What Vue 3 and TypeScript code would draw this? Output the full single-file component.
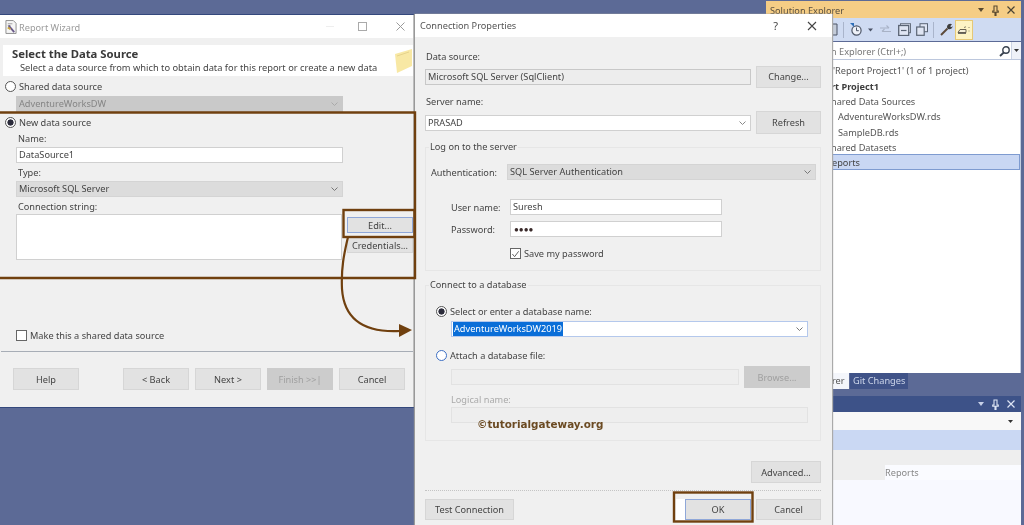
<script setup lang="ts">
const treeRows = [
  { text: "'Report Project1' (1 of 1 project)", cls: 'd0' },
  { text: 'rt Project1', cls: 'd1' },
  { text: 'hared Data Sources', cls: 'd2' },
  { text: 'AdventureWorksDW.rds', cls: 'd3' },
  { text: 'SampleDB.rds', cls: 'd3' },
  { text: 'hared Datasets', cls: 'd2' },
  { text: 'eports', cls: 'd2 current' },
]
</script>

<template>
  <div class="desk">
    <!-- Solution Explorer tool window -->
    <section class="vs">
      <div class="se">
        <header class="se-title">
          <span class="se-name">Solution Explorer</span>
          <span class="se-ctl">
            <svg width="6" height="4" viewBox="0 0 6 4"><path d="M0 0h6L3 4z" fill="#5a4a30" /></svg>
            <svg width="7" height="11" viewBox="0 0 7 11"><path d="M2 1h3v5h1.300v1.300H4V10.500H3V7.300H.7V6H2z" fill="none" stroke="#5a4a30" stroke-width="1.100" /></svg>
            <svg width="8" height="8" viewBox="0 0 8 8"><path d="M.5.5l7 7M7.500.5l-7 7" stroke="#4a4436" stroke-width="1.200" /></svg>
          </span>
        </header>
        <div class="se-tools">
          <svg class="t-home" width="7" height="13" viewBox="0 0 7 13">
            <path d="M0 1h6v11H0" fill="#c4ccd9" stroke="#4c5566" />
          </svg>
          <span class="t-sep first"></span>
          <svg class="t-clock" width="12" height="13" viewBox="0 0 12 13">
            <circle cx="6.500" cy="7.500" r="4.600" fill="#eef1f8" stroke="#4c5566" stroke-width="1.200" />
            <path d="M6.500 4.500v3.200h2.300" fill="none" stroke="#4c5566" />
            <path d="M0 0h4v4z" fill="#2f6fb8" />
          </svg>
          <svg class="t-drop" width="5" height="4" viewBox="0 0 5 4"><path d="M0 .5h5L2.500 3.500z" fill="#4a5366" /></svg>
          <svg class="t-sync" width="11" height="9" viewBox="0 0 11 9">
            <path d="M0 3h9M6.500.5L9 3M11 6.500H2M4.500 4L2 6.500" fill="none" stroke="#a8b2c6" stroke-width="1.100" />
          </svg>
          <svg class="t-coll" width="13" height="13" viewBox="0 0 13 13">
            <rect x="2.500" y=".7" width="10" height="9" fill="#dfe5f3" stroke="#66707f" />
            <rect x=".7" y="2.500" width="10" height="10" fill="#dfe5f3" stroke="#5a6474" stroke-width="1.300" />
            <path d="M3 7.500h5.500" stroke="#5a6474" stroke-width="1.200" />
          </svg>
          <svg class="t-copy" width="12" height="13" viewBox="0 0 12 13">
            <rect x="4" y=".7" width="7.500" height="8" fill="#dfe5f3" stroke="#5a6474" />
            <rect x=".7" y="4" width="7.500" height="8.300" fill="#dfe5f3" stroke="#5a6474" stroke-width="1.200" />
          </svg>
          <span class="t-sep"></span>
          <svg class="t-wrench" width="13" height="13" viewBox="0 0 13 13">
            <path d="M1 12l6.500-6.500" stroke="#5c4a3a" stroke-width="2" />
            <path d="M7 4.500a3.200 3.200 0 0 1 5-3.200l-1.800 2 1.200 1 1.200-1.200a3 3 0 0 1-4.500 2.800z" fill="#3d3d3d" />
          </svg>
          <span class="t-active">
            <svg width="14" height="9" viewBox="0 0 14 9">
              <path d="M1 7.500h8V4.500H3z" fill="#f4efd8" stroke="#6a6252" />
              <path d="M1 8.300h8" stroke="#4a4a4a" />
              <path d="M7 2.500l2-.7M12 2v1M12 5.500v1" stroke="#8a8468" />
            </svg>
          </span>
        </div>
        <div class="se-search">
          <span class="se-hint">n Explorer (Ctrl+;)</span>
          <svg class="se-mag" width="11" height="11" viewBox="0 0 11 11">
            <circle cx="7" cy="4" r="3.200" fill="none" stroke="#39424f" stroke-width="1.400" />
            <path d="M4.800 6.500L1 10" stroke="#39424f" stroke-width="1.800" />
          </svg>
          <span class="se-more"><svg width="5" height="3" viewBox="0 0 5 3"><path d="M0 0h5L2.500 3z" fill="#333" /></svg></span>
        </div>
        <ul class="tree">
          <li v-for="row in treeRows" :key="row.text" :class="['row', row.cls]">
            <i v-if="row.cls === 'd3'" class="rds"></i>{{ row.text }}
          </li>
        </ul>
        <div class="tabs">
          <span class="tab on">rer</span>
          <span class="tab">Git Changes</span>
        </div>
      </div>
      <div class="props">
        <header class="p-title">
          <span class="se-ctl">
            <svg width="6" height="4" viewBox="0 0 6 4"><path d="M0 0h6L3 4z" fill="#c6d0e8" /></svg>
            <svg width="7" height="11" viewBox="0 0 7 11"><path d="M2 1h3v5h1.300v1.300H4V10.500H3V7.300H.7V6H2z" fill="none" stroke="#dde4f4" stroke-width="1.100" /></svg>
            <svg width="8" height="8" viewBox="0 0 8 8"><path d="M.5.5l7 7M7.500.5l-7 7" stroke="#dde4f4" stroke-width="1.200" /></svg>
          </span>
        </header>
        <div class="p-combo"><svg width="5" height="3" viewBox="0 0 5 3"><path d="M0 0h5L2.500 3z" fill="#333" /></svg></div>
        <div class="p-band"></div>
        <div class="p-grey"></div>
        <div class="p-row"><span class="p-cell"></span><span class="p-val">Reports</span></div>
      </div>
    </section>

    <!-- Report Wizard -->
    <section class="win wizard">
      <header class="titlebar">
        <svg class="w-ico" width="12" height="14" viewBox="0 0 13 15">
          <path d="M1 .5h8l3 3v11H1z" fill="#f5f5f5" stroke="#8a8a8a" />
          <path d="M3 4h5M3 6h3" stroke="#9a9a9a" />
          <path d="M4 6l6 7" stroke="#6a5a8a" stroke-width="2" />
          <path d="M3 8l3 2" stroke="#c9a43a" stroke-width="2" />
        </svg>
        <span class="t-text faint">Report Wizard</span>
        <span class="w-ctl">
          <i class="ctl-min"></i>
          <i class="ctl-max"></i>
          <svg width="9" height="9" viewBox="0 0 9 9"><path d="M.5.5l8 8M8.500.5l-8 8" stroke="#9a9a9a" /></svg>
        </span>
      </header>
      <div class="wz-head">
        <div>
          <h1>Select the Data Source</h1>
          <p>Select a data source from which to obtain data for this report or create a new data</p>
        </div>
        <svg class="folder" width="19" height="24" viewBox="0 0 19 24">
          <path d="M1 5l17-5v17L3 24z" fill="#f8e8a4" />
          <path d="M3 7l12-4" stroke="#e6d38c" />
        </svg>
      </div>
      <div class="wz-body">
        <label class="radio-row r-shared"><i class="radio"></i>Shared data source</label>
        <div class="field drop disabled s-shared">AdventureWorksDW<svg class="chev" width="7" height="4" viewBox="0 0 7 4"><path d="M.5.5l3 3 3-3" fill="none" stroke="#aaa" /></svg></div>
        <label class="radio-row r-new"><i class="radio on"></i>New data source</label>
        <div class="lab l-name">Name:</div>
        <div class="field txt f-name">DataSource1</div>
        <div class="lab l-type">Type:</div>
        <div class="field drop f-type">Microsoft SQL Server<svg class="chev" width="7" height="4" viewBox="0 0 7 4"><path d="M.5.5l3 3 3-3" fill="none" stroke="#777" /></svg></div>
        <div class="lab l-conn">Connection string:</div>
        <div class="conn-row">
          <div class="area"></div>
          <div class="conn-btns">
            <button class="btn focus b-edit">Edit...</button>
            <button class="btn b-cred">Credentials...</button>
          </div>
        </div>
        <label class="check-row"><i class="check"></i>Make this a shared data source</label>
      </div>
      <hr class="wz-hr" />
      <footer class="wz-foot">
        <button class="btn wz-b">Help</button>
        <span class="wz-gap"></span>
        <button class="btn wz-b">&lt; Back</button>
        <button class="btn wz-b">Next &gt;</button>
        <button class="btn wz-b off">Finish &gt;&gt;|</button>
        <button class="btn wz-b">Cancel</button>
      </footer>
    </section>

    <!-- Connection Properties -->
    <section class="win conn">
      <header class="titlebar">
        <span class="t-text">Connection Properties</span>
        <span class="c-ctl">
          <span class="q">?</span>
          <svg width="10" height="10" viewBox="0 0 10 10"><path d="M1 1l8 8M9 1l-8 8" stroke="#444" stroke-width="1.100" /></svg>
        </span>
      </header>
      <div class="c-body">
        <div class="lab c-l1">Data source:</div>
        <div class="c-row ds-row">
          <div class="field grey grow">Microsoft SQL Server (SqlClient)</div>
          <button class="btn c-b tall">Change...</button>
        </div>
        <div class="lab c-l2">Server name:</div>
        <div class="c-row srv-row">
          <div class="field txt grow">PRASAD<svg class="chev" width="7" height="4" viewBox="0 0 7 4"><path d="M.5.5l3 3 3-3" fill="none" stroke="#888" /></svg></div>
          <button class="btn c-b tall2">Refresh</button>
        </div>
        <fieldset class="grp g1">
          <legend>Log on to the server</legend>
          <div class="auth">
            <span class="auth-l">Authentication:</span>
            <div class="field drop auth-s">SQL Server Authentication<svg class="chev" width="7" height="4" viewBox="0 0 7 4"><path d="M.5.5l3 3 3-3" fill="none" stroke="#777" /></svg></div>
          </div>
          <div class="cred c1"><span>User name:</span><div class="field txt">Suresh</div></div>
          <div class="cred c2"><span>Password:</span><div class="field txt pw">●●●●</div></div>
          <label class="save"><i class="check"><svg width="10" height="10" viewBox="0 0 10 10"><path d="M1.500 5l2.500 3 4.500-6" fill="none" stroke="#555" /></svg></i>Save my password</label>
        </fieldset>
        <fieldset class="grp g2">
          <legend>Connect to a database</legend>
          <label class="radio-row d-sel"><i class="radio on"></i>Select or enter a database name:</label>
          <div class="field txt db"><span class="hl">AdventureWorksDW2019</span><svg class="chev" width="7" height="4" viewBox="0 0 7 4"><path d="M.5.5l3 3 3-3" fill="none" stroke="#777" /></svg></div>
          <label class="radio-row d-att"><i class="radio blue"></i>Attach a database file:</label>
          <div class="file-row">
            <div class="field ghost grow"></div>
            <button class="btn off br">Browse...</button>
          </div>
          <div class="lab ghost-l">Logical name:</div>
          <div class="field ghost ln"></div>
        </fieldset>
        <div class="adv"><button class="btn adv-b">Advanced...</button></div>
        <hr class="c-hr" />
        <footer class="c-foot">
          <button class="btn test">Test Connection</button>
          <span class="wz-gap"></span>
          <button class="btn focus ok">OK</button>
          <button class="btn cancel">Cancel</button>
        </footer>
      </div>
      <span class="mark">©tutorialgateway.org</span>
    </section>

    <!-- Tutorial annotations laid over the windows -->
    <svg class="notes" width="1024" height="525" viewBox="0 0 1024 525">
      <g fill="none" stroke="#70400f" stroke-width="2.400">
        <path d="M-3 112.500H415V278H-3" />
        <rect x="343.500" y="210" width="71" height="27" />
        <rect x="674" y="492.500" width="78.500" height="29" />
        <path d="M348 237C344 254 341 268 342 289C344 318 362 333 400 331" stroke-width="2.200" />
      </g>
      <path d="M399 324L412 330L399 337Z" fill="#70400f" />
    </svg>
  </div>
</template>

<style>
html, body { margin: 0; background: #5c6a96; }
</style>

<style scoped>
.desk {
  position: relative;
  width: 1024px;
  height: 525px;
  overflow: hidden;
  background: #5c6a96;
  font: 9.200px/15px "Noto Sans", "Open Sans", sans-serif;
  color: #444;
  filter: blur(0.3px);
}
* { box-sizing: border-box; }
i { display: block; flex: none; font-style: normal; }
h1, p, ul { margin: 0; padding: 0; }
button { font: inherit; color: #444; padding: 0; }
.notes { position: absolute; left: 0; top: 0; }

/* windows */
.win { position: absolute; display: flex; flex-direction: column; background: #f0f0f0; }
.wizard { left: 0; top: 15px; width: 415px; height: 392px; border-right: 2px solid #c4c4c4; box-shadow: 0 -1px 0 #34487c, 0 1px 0 #34487c; }
.conn { left: 415px; top: 14px; width: 417px; height: 511px; box-shadow: -1px 0 1px #999, 1px 0 1px #aaa; }
.titlebar { display: flex; align-items: center; flex: none; height: 23px; background: #fff; }
.t-text { color: #555; margin-left: 5px; }
.t-text.faint { color: #9b9b9b; margin-left: 2px; padding-top: 1px; }
.w-ico { margin-left: 5px; }
.w-ctl { margin-left: auto; display: flex; align-items: center; margin-right: 8px; }
.ctl-min { width: 8px; height: 1px; background: #eee; margin-right: 24px; }
.ctl-max { width: 9px; height: 9px; border: 1px solid #aaa; margin-right: 29px; }
.c-ctl { margin-left: auto; display: flex; align-items: center; margin-right: 15px; gap: 29px; color: #444; }
.q { font-size: 11px; }

/* wizard */
.wz-head { display: flex; justify-content: space-between; align-items: center; height: 31px; margin: 7px 0 0 3px; padding-left: 9px; background: #fff; overflow: hidden; }
.wz-head h1 { font-size: 11.300px; line-height: 15px; font-weight: 700; color: #3a3a3a; }
.wz-head p { margin-left: 8px; line-height: 14px; font-size: 9.300px; white-space: nowrap; }
.wz-body { display: flex; flex-direction: column; flex: 1; padding-left: 5px; }
.radio-row { display: flex; align-items: center; gap: 3px; height: 15px; }
.radio { width: 11px; height: 11px; border: 1px solid #555; border-radius: 50%; background: #fff; }
.radio.on { background: radial-gradient(circle, #2b2b3a 0 2.800px, #fff 3.400px); }
.radio.blue { border-color: #3d6fc4; }
.r-shared { margin-top: 3px; }
.s-shared { margin-top: 2px; }
.r-new { margin-top: 3px; }
.lab { margin-left: 13px; height: 15px; }
.l-name { margin-top: 1px; }
.f-name { margin-top: 1px; }
.l-type { margin-top: 2px; }
.f-type { margin-top: 1px; }
.l-conn { margin-top: 2px; }
.field { position: relative; display: flex; align-items: center; height: 16px; padding-left: 2px; border: 1px solid #d0d0d0; line-height: 14px; white-space: nowrap; }
.wz-body > .field { margin-left: 11px; width: 327px; }
.txt { background: #fff; }
.drop { background: #dcdcdc; border-color: #d4d4d4; }
.disabled { background: #c9c9c9; border-color: #c9c9c9; color: #858585; }
.grey { background: #ededed; border-color: #c8c8c8; }
.ghost { background: #eeeeee; border-color: #e2e2e2; }
.grow { flex: 1; }
.chev { position: absolute; right: 4px; top: 5px; }
.conn-row { display: flex; height: 46px; margin: 0 0 0 11px; }
.area { width: 327px; background: #fff; border: 1px solid #d0d0d0; }
.conn-btns { display: flex; flex-direction: column; gap: 4px; margin: 3px 0 0 5px; }
.btn { display: flex; align-items: center; justify-content: center; background: #e2e2e2; border: 1px solid #d6d6d6; }
.b-edit, .b-cred { width: 66px; height: 16px; }
.focus { border-color: #8fa7d8; }
.off { background: #cccccc; border-color: #cccccc; color: #a0a0a0; }
.check-row { display: flex; align-items: center; gap: 3px; margin: 68px 0 0 11px; height: 15px; }
.check { display: flex; width: 11px; height: 11px; border: 1px solid #666; background: #fff; }
.wz-hr { flex: none; margin: 8px 0 0 1px; border: 0; height: 1px; background: #a7adb6; }
.wz-foot { display: flex; flex: none; gap: 6px; height: 55px; padding: 16px 8px 0 13px; }
.wz-b { width: 66px; height: 22px; }
.wz-gap { flex: 1; }

/* connection dialog */
.c-body { display: flex; flex-direction: column; flex: 1; padding: 0 11px 0 10px; }
.c-l1, .c-l2 { margin-left: 1px; }
.c-l1 { margin-top: 12px; }
.c-row { display: flex; align-items: center; gap: 5px; }
.ds-row { height: 23px; margin-top: 1px; }
.srv-row { height: 23px; margin-top: 2px; }
.c-l2 { margin-top: 6px; }
.c-b { width: 65px; }
.tall { height: 22px; }
.tall2 { height: 23px; }
.grp { margin: 0; padding: 0; border: 1px solid #e6e6e6; display: flex; flex-direction: column; position: relative; }
.grp legend { padding: 0 1px; margin-left: 3px; line-height: 14px; }
.g1 { height: 131px; margin-top: 6px; }
.auth { display: flex; align-items: center; margin: 10px 4px 0 5px; }
.auth-l { width: 76px; }
.auth-s { flex: 1; }
.cred { display: flex; align-items: center; }
.cred span { width: 59px; margin-left: 25px; white-space: nowrap; }
.cred .field { width: 212px; }
.c1 { margin-top: 19px; }
.c2 { margin-top: 6px; }
.pw { font-size: 8px; color: #3a2a2a; padding-left: 3px; }
.save { display: flex; align-items: center; gap: 3px; margin: 9px 0 0 84px; }
.g2 { height: 163px; margin-top: 7px; }
.d-sel { margin: 12px 0 0 10px; }
.db { width: 357px; margin: 2px 0 0 25px; border-color: #b4c8ec; }
.hl { background: #0a6ed8; color: #fff; padding: 0 1px; margin-left: -1px; }
.d-att { margin: 11px 0 0 10px; }
.file-row { display: flex; gap: 5px; align-items: center; height: 22px; margin: 3px 10px 0 25px; }
.br { width: 66px; height: 22px; }
.ghost-l { color: #aaa; margin: 4px 0 0 25px; }
.ln { width: 357px; height: 16px; margin: 0 0 0 25px; }
.adv { display: flex; justify-content: flex-end; margin-top: 20px; }
.adv-b { width: 70px; height: 22px; }
.c-hr { margin: 7px 0 0; border: 0; border-top: 1px dotted #c4c4c4; height: 1px; }
.c-foot { display: flex; gap: 5px; margin-top: 8px; }
.test { width: 89px; height: 21px; }
.ok { width: 66px; height: 21px; box-shadow: -9px 0 0 #fff; }
.cancel { width: 65px; height: 21px; }
.mark { position: absolute; left: 62px; top: 402px; font: 700 10.400px/16px "DejaVu Sans", sans-serif; color: #6b4a22; }

/* Solution Explorer */
.vs { position: absolute; left: 766px; top: 1px; width: 255px; height: 524px; display: flex; flex-direction: column; }
.se { display: flex; flex-direction: column; height: 388px; }
.se-title { display: flex; align-items: center; flex: none; height: 17px; padding: 1px 6px 0 4px; background: #f5cd85; color: #5a5040; }
.se-ctl { margin-left: auto; display: flex; align-items: center; gap: 8px; }
.se-tools { display: flex; align-items: center; flex: none; height: 23px; padding-left: 65px; background: #cfdbf2; }
.t-sep { width: 1px; height: 16px; background: #a9b4cb; margin-left: 5px; }
.t-sep.first { margin-left: 5px; }
.t-clock { margin-left: 6px; }
.t-drop { margin-left: 6px; }
.t-sync { margin-left: 7px; }
.t-coll { margin-left: 7px; }
.t-copy { margin-left: 5px; }
.t-wrench { margin-left: 6px; }
.t-active { display: flex; align-items: center; justify-content: center; width: 18px; height: 20px; margin-left: 2px; background: #fdf3c4; border: 1px solid #e6c877; }
.se-search { position: relative; display: flex; align-items: center; flex: none; height: 18px; margin-top: 1px; padding: 1px 0 0 65px; background: #fff; border-bottom: 1px solid #bcc7dd; color: #777; }
.se-hint { white-space: nowrap; }
.se-mag { position: absolute; right: 11px; top: 4px; }
.se-more { position: absolute; right: 0; top: 0; width: 10px; height: 17px; display: flex; align-items: center; justify-content: center; border-left: 1px solid #ccd4e4; background: #eef1f8; }
.tree { list-style: none; flex: 1; background: #fff; border-right: 1px solid #c3cde0; padding-top: 3px; }
.row { display: flex; align-items: center; height: 15.400px; color: #555; white-space: nowrap; }
.d0 { padding-left: 67px; }
.d1 { padding-left: 65px; font-weight: 700; color: #3d3d3d; }
.d2 { padding-left: 65px; }
.d3 { padding-left: 65px; }
.rds { width: 2px; height: 11px; margin-right: 5px; background: #2f64a8; }
.current { margin-top: -1px; background: #c9d7f3; border: 1px solid #7e9bd0; color: #444; }
.tabs { display: flex; flex: none; height: 16px; padding-left: 65px; background: #5c6a96; }
.tab { padding: 0 3px; line-height: 15px; }
.tab.on { background: #f4f6fb; color: #555; width: 18px; padding-left: 1px; }
.tab:not(.on) { background: #405388; color: #cdd6ea; margin-left: 1px; }
.props { display: flex; flex-direction: column; flex: 1; margin-top: 7px; background: #f8f9ff; }
.p-title { display: flex; flex: none; height: 16px; padding-right: 6px; background: #3d5288; }
.p-combo { display: flex; align-items: center; justify-content: flex-end; flex: none; height: 18px; padding-right: 8px; background: #f8f8f8; }
.p-band { flex: none; height: 20px; background: #cad8f3; }
.p-grey { flex: none; height: 15px; background: #eeeeee; }
.p-row { display: flex; flex: none; height: 15px; color: #888; }
.p-cell { width: 119px; background: #eeeeee; }
.p-val { flex: 1; background: #fafbff; }
</style>
